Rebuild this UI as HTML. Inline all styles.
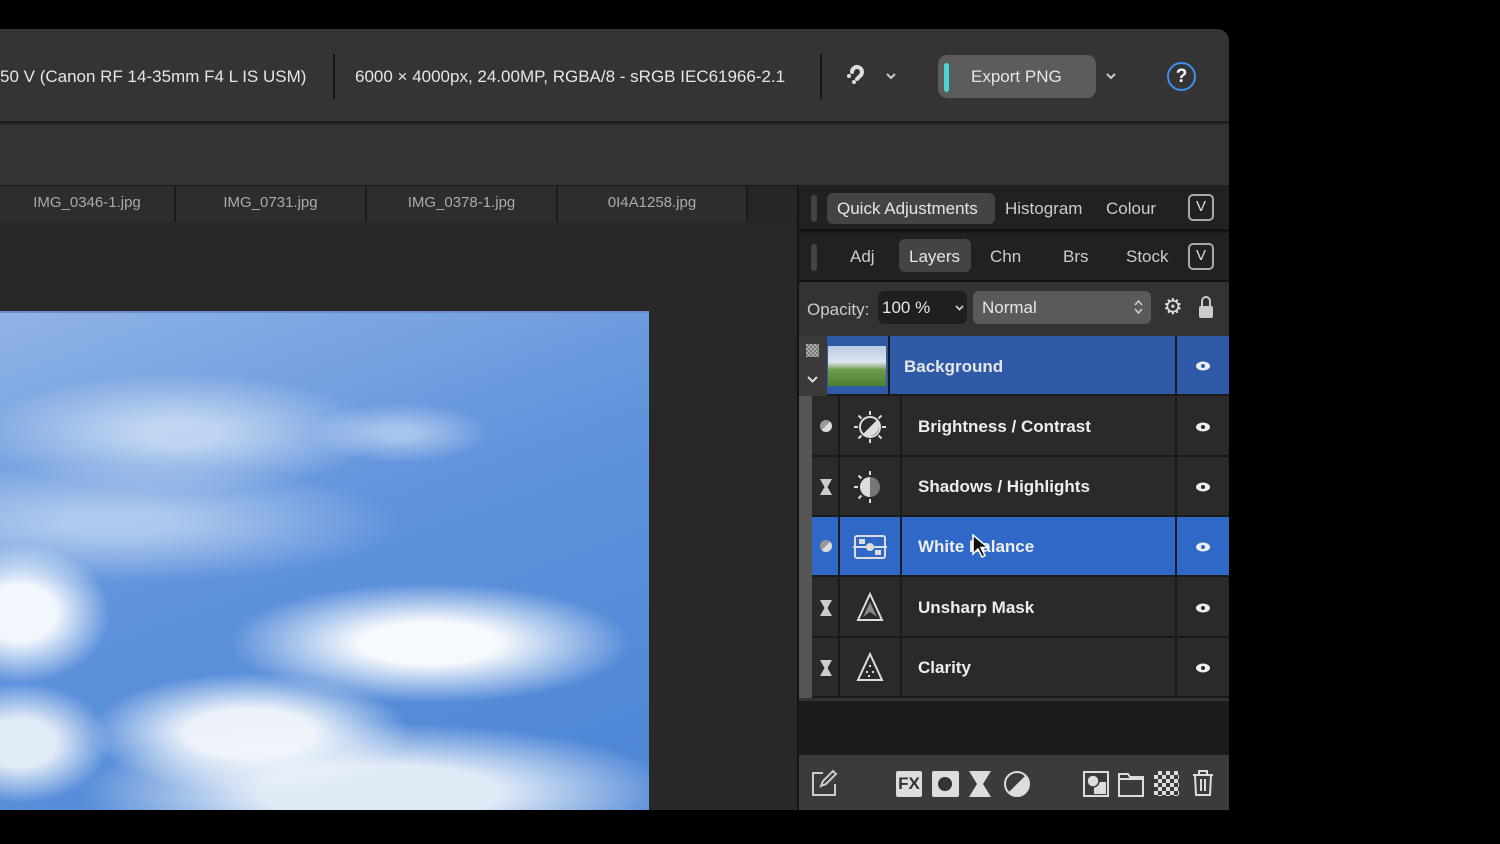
<!DOCTYPE html>
<html><head><meta charset="utf-8"><style>
*{margin:0;padding:0;box-sizing:border-box}
body{width:1500px;height:844px;background:#000;position:relative;overflow:hidden;font-family:"Liberation Sans",sans-serif;color:#ddd}
.a{position:absolute}
.win{left:0;top:29px;width:1229px;height:781px;background:#2a2a2a;border-top-right-radius:12px;overflow:hidden}
.tb{left:0;top:0;width:1229px;height:94px;background:#343434;border-bottom:2px solid #1b1b1b}
.t{font-size:17px;color:#e6e6e6;white-space:nowrap}
.bar2{left:0;top:96px;width:1229px;height:60px;background:#333}
.tabs{left:0;top:156px;width:797px;height:37px;background:#262626;border-top:1px solid #1a1a1a}
.tab{top:0;height:36px;border-right:2px solid #1b1b1b;background:#2d2d2d;color:#aaa;font-size:15px;text-align:center;line-height:34px}
.canvas{left:0;top:193px;width:797px;height:588px;background:#282828}
.img{left:0;top:282px;width:649px;height:500px;border-top:2px solid #6d8fd0;
background:
radial-gradient(ellipse 90px 70px at 20px 300px,rgba(250,252,255,.95) 40%,transparent 100%),
radial-gradient(ellipse 200px 60px at 430px 330px,rgba(255,255,255,.95) 35%,transparent 100%),
radial-gradient(ellipse 160px 60px at 250px 420px,rgba(245,248,252,.95) 40%,transparent 100%),
radial-gradient(ellipse 300px 70px at 380px 480px,rgba(240,244,250,.9) 40%,transparent 100%),
radial-gradient(ellipse 90px 60px at 20px 430px,rgba(240,244,250,.9) 40%,transparent 100%),
radial-gradient(ellipse 200px 60px at 180px 120px,rgba(255,255,255,.55) 20%,transparent 100%),
radial-gradient(ellipse 280px 60px at 120px 210px,rgba(230,238,250,.55) 20%,transparent 100%),
radial-gradient(ellipse 90px 30px at 400px 120px,rgba(230,238,250,.5) 20%,transparent 100%),
linear-gradient(160deg,#8fb3e6 0%,#5f93dc 45%,#4c86d6 100%)}
.panel{left:797px;top:156px;width:432px;height:625px;background:#1c1c1c;border-left:2px solid #151515}
.row{left:0;width:432px}
.pill{border-radius:6px}
.ly{left:0;width:432px;height:60px;border-bottom:2px solid #1a1a1a;background:#2a2a2a}
.ly .nm{position:absolute;left:120px;top:0;line-height:60px;font-size:17px;color:#eee;font-weight:bold}
.ly .c1{position:absolute;left:13px;top:0;width:28px;height:60px;border-right:2px solid #1a1a1a}
.ly .c2{position:absolute;left:43px;top:0;width:60px;height:60px;border-right:2px solid #1a1a1a}
.ly .c3{position:absolute;left:376px;top:0;width:2px;height:60px;background:#1a1a1a}
.eye{position:absolute;left:396px;top:24px}
</style></head><body>
<div class="a win">
 <div class="a tb">
  <div class="a t" style="left:0;top:38px">50 V (Canon RF 14-35mm F4 L IS USM)</div>
  <div class="a" style="left:333px;top:25px;width:2px;height:45px;background:#151515"></div>
  <div class="a t" style="left:355px;top:38px">6000 × 4000px, 24.00MP, RGBA/8 - sRGB IEC61966-2.1</div>
  <div class="a" style="left:820px;top:25px;width:2px;height:45px;background:#151515"></div>
  <svg class="a" style="left:844px;top:34px" width="26" height="26" viewBox="0 0 26 26"><path d="M8 9a5 5 0 1 1 8 4l-3 3" stroke="#ddd" stroke-width="4" fill="none" stroke-linecap="round"/><circle cx="5" cy="13" r="2" fill="#ddd"/><circle cx="10" cy="19" r="2" fill="#ddd"/></svg>
  <svg class="a" style="left:886px;top:44px" width="10" height="7"><path d="M1 1l4 4 4-4" stroke="#ccc" stroke-width="2" fill="none"/></svg>
  <div class="a pill" style="left:938px;top:26px;width:158px;height:43px;background:#5c5c5c;border-radius:9px"></div>
  <div class="a" style="left:944px;top:34px;width:5px;height:29px;background:#4dd4d8;border-radius:3px"></div>
  <div class="a t" style="left:971px;top:38px;font-size:17px">Export PNG</div>
  <svg class="a" style="left:1106px;top:44px" width="10" height="7"><path d="M1 1l4 4 4-4" stroke="#ccc" stroke-width="2" fill="none"/></svg>
  <div class="a" style="left:1167px;top:33px;width:29px;height:29px;border:2px solid #3d8ef0;border-radius:50%;color:#fff;font-weight:bold;font-size:19px;text-align:center;line-height:25px">?</div>
 </div>
 <div class="a bar2"></div>
 <div class="a tabs">
  <div class="a tab" style="left:0;width:176px">IMG_0346-1.jpg</div>
  <div class="a tab" style="left:176px;width:191px">IMG_0731.jpg</div>
  <div class="a tab" style="left:367px;width:191px">IMG_0378-1.jpg</div>
  <div class="a tab" style="left:558px;width:190px">0I4A1258.jpg</div>
 </div>
 <div class="a canvas"></div>
 <div class="a img"></div>
 <div class="a panel">
  <div class="a row" style="top:0;height:47px;background:#212121;border-bottom:3px solid #141414">
   <div class="a" style="left:12px;top:10px;width:6px;height:27px;background:#444;border-radius:3px"></div>
   <div class="a pill" style="left:28px;top:8px;width:168px;height:31px;background:#444"></div>
   <div class="a t" style="left:38px;top:14px">Quick Adjustments</div>
   <div class="a t" style="left:206px;top:14px;color:#ccc">Histogram</div>
   <div class="a t" style="left:307px;top:14px;color:#ccc">Colour</div>
   <div class="a" style="left:389px;top:9px;width:26px;height:27px;border:2px solid #aaa;border-radius:5px;color:#ddd;text-align:center;font-size:15px;line-height:22px">V</div>
  </div>
  <div class="a row" style="top:49px;height:48px;background:#212121;border-bottom:2px solid #141414">
   <div class="a" style="left:12px;top:10px;width:6px;height:27px;background:#444;border-radius:3px"></div>
   <div class="a t" style="left:51px;top:13px;color:#ccc">Adj</div>
   <div class="a pill" style="left:100px;top:5px;width:72px;height:33px;background:#444"></div>
   <div class="a t" style="left:110px;top:13px">Layers</div>
   <div class="a t" style="left:191px;top:13px;color:#ccc">Chn</div>
   <div class="a t" style="left:264px;top:13px;color:#ccc">Brs</div>
   <div class="a t" style="left:327px;top:13px;color:#ccc">Stock</div>
   <div class="a" style="left:389px;top:9px;width:26px;height:27px;border:2px solid #aaa;border-radius:5px;color:#ddd;text-align:center;font-size:15px;line-height:22px">V</div>
  </div>
  <div class="a row" style="top:97px;height:54px;background:#333">
   <div class="a t" style="left:8px;top:18px;color:#ccc">Opacity:</div>
   <div class="a pill" style="left:79px;top:9px;width:89px;height:33px;background:#1f1f1f"></div>
   <div class="a t" style="left:83px;top:16px">100 %</div>
   <svg class="a" style="left:156px;top:23px" width="9" height="6"><path d="M1 1l3.5 3.5L8 1" stroke="#ccc" stroke-width="1.8" fill="none"/></svg>
   <div class="a pill" style="left:174px;top:9px;width:178px;height:33px;background:#5a5a5a"></div>
   <div class="a t" style="left:183px;top:16px">Normal</div>
   <svg class="a" style="left:335px;top:17px" width="9" height="16"><path d="M1 6l3.5-4L8 6M1 10l3.5 4L8 10" stroke="#ccc" stroke-width="1.6" fill="none"/></svg>
   <div class="a t" style="left:364px;top:12px;font-size:22px;color:#ddd">⚙</div>
   <div class="a" style="left:400px;top:24px;width:14px;height:12px;background:#ccc;border-radius:2px"></div>
   <div class="a" style="left:402px;top:14px;width:10px;height:14px;border:2px solid #ccc;border-bottom:none;border-radius:5px 5px 0 0"></div>
  </div>
  <div class="a" style="left:0;top:151px;width:432px;height:362px;background:#282828"></div>
  <div class="a ly" style="top:151px;background:#2f5aa8">
   <div class="a" style="left:0;top:0;width:28px;height:60px;background:#3a3a3a"></div>
   <div class="a" style="left:7px;top:8px;width:13px;height:13px;background:repeating-conic-gradient(#777 0 25%,#aaa 0 50%) 0 0/4px 4px"></div>
   <svg class="a" style="left:8px;top:40px" width="11" height="7"><path d="M1 1l4.5 4.5L10 1" stroke="#ddd" stroke-width="2" fill="none"/></svg>
   <div class="a" style="left:29px;top:10px;width:58px;height:40px;background:linear-gradient(#b9cbe0 0%,#dde6ef 40%,#6f9a4e 60%,#4e7f30 100%)"></div>
   <div class="a" style="left:89px;top:0;width:2px;height:60px;background:#1a1a1a"></div>
   <div class="a t" style="left:105px;top:21px;font-weight:bold">Background</div>
   <div class="a" style="left:376px;top:0;width:2px;height:60px;background:#1a1a1a"></div>
   <svg class="eye" width="16" height="12"><ellipse cx="8" cy="6" rx="7" ry="4.5" fill="#eee"/><circle cx="8" cy="6" r="2" fill="#2f5aa8"/></svg>
  </div>
  <div class="a" style="left:0;top:211px;width:13px;height:302px;background:#555"></div>
  <div class="a ly" style="top:212px;left:13px;width:419px"><div class="c1" style="left:0"></div><div class="c2" style="left:30px"></div>
   <div class="nm" style="left:106px">Brightness / Contrast</div><div class="c3" style="left:363px"></div>
   <div class="a" style="left:8px;top:23px;width:12px;height:12px;border-radius:50%;background:linear-gradient(135deg,#999 50%,#ddd 50%)"></div>
   <svg class="a" style="left:40px;top:12px" width="36" height="36"><circle cx="18" cy="18" r="10" stroke="#ddd" stroke-width="2" fill="none"/><path d="M11 25L25 11A10 10 0 0 1 11 25Z" fill="#ddd"/><g stroke="#ddd" stroke-width="2"><path d="M18 2v4M18 30v4M2 18h4M30 18h4M6.5 6.5l3 3M26.5 26.5l3 3M6.5 29.5l3-3M26.5 9.5l3-3"/></g></svg>
   <svg class="eye" style="left:383px" width="16" height="12"><ellipse cx="8" cy="6" rx="7" ry="4.5" fill="#eee"/><circle cx="8" cy="6" r="2" fill="#2a2a2a"/></svg>
  </div>
  <div class="a ly" style="top:272px;left:13px;width:419px"><div class="c1" style="left:0"></div><div class="c2" style="left:30px"></div>
   <div class="nm" style="left:106px">Shadows / Highlights</div><div class="c3" style="left:363px"></div>
   <svg class="a" style="left:8px;top:22px" width="12" height="16"><path d="M0 0H12L7.5 8L12 16H0L4.5 8Z" fill="#ccc"/></svg>
   <svg class="a" style="left:40px;top:12px" width="36" height="36"><path d="M18 8A10 10 0 0 0 18 28Z" fill="#ddd"/><path d="M18 8A10 10 0 0 1 18 28Z" fill="#777"/><g stroke="#ddd" stroke-width="2"><path d="M18 2v4M18 30v4M2 18h4M6.5 6.5l3 3M6.5 29.5l3-3"/></g></svg>
   <svg class="eye" style="left:383px" width="16" height="12"><ellipse cx="8" cy="6" rx="7" ry="4.5" fill="#eee"/><circle cx="8" cy="6" r="2" fill="#2a2a2a"/></svg>
  </div>
  <div class="a ly" style="top:332px;left:13px;width:419px;background:#3068c8"><div class="c1" style="left:0"></div><div class="c2" style="left:30px"></div>
   <div class="nm" style="left:106px">White Balance</div><div class="c3" style="left:363px"></div>
   <div class="a" style="left:8px;top:23px;width:12px;height:12px;border-radius:50%;background:linear-gradient(135deg,#999 50%,#ddd 50%)"></div>
   <svg class="a" style="left:40px;top:16px" width="36" height="28"><rect x="3" y="3" width="30" height="22" rx="2" stroke="#ddd" stroke-width="2" fill="none"/><path d="M1 14h34" stroke="#ddd" stroke-width="2"/><circle cx="18" cy="14" r="4" fill="#ddd"/><rect x="7" y="6" width="6" height="5" fill="#ddd"/><rect x="23" y="17" width="6" height="5" fill="#ddd"/></svg>
   <svg class="eye" style="left:383px" width="16" height="12"><ellipse cx="8" cy="6" rx="7" ry="4.5" fill="#eee"/><circle cx="8" cy="6" r="2" fill="#3068c8"/></svg>
   <svg class="a" style="left:159px;top:16px" width="18" height="26"><path d="M2 2v19l5-5 4 8 3-1.5-4-8h7z" fill="#111" stroke="#fff" stroke-width="1.5"/></svg>
  </div>
  <div class="a ly" style="top:393px;left:13px;width:419px"><div class="c1" style="left:0"></div><div class="c2" style="left:30px"></div>
   <div class="nm" style="left:106px">Unsharp Mask</div><div class="c3" style="left:363px"></div>
   <svg class="a" style="left:8px;top:22px" width="12" height="16"><path d="M0 0H12L7.5 8L12 16H0L4.5 8Z" fill="#ccc"/></svg>
   <svg class="a" style="left:44px;top:14px" width="28" height="30"><path d="M14 2L26 28H2Z" stroke="#ddd" stroke-width="2" fill="none"/><path d="M14 10L21 25L14 20L7 25Z" fill="#888"/></svg>
   <svg class="eye" style="left:383px" width="16" height="12"><ellipse cx="8" cy="6" rx="7" ry="4.5" fill="#eee"/><circle cx="8" cy="6" r="2" fill="#2a2a2a"/></svg>
  </div>
  <div class="a ly" style="top:453px;left:13px;width:419px"><div class="c1" style="left:0"></div><div class="c2" style="left:30px"></div>
   <div class="nm" style="left:106px">Clarity</div><div class="c3" style="left:363px"></div>
   <svg class="a" style="left:8px;top:22px" width="12" height="16"><path d="M0 0H12L7.5 8L12 16H0L4.5 8Z" fill="#ccc"/></svg>
   <svg class="a" style="left:44px;top:14px" width="28" height="30"><path d="M14 2L26 28H2Z" stroke="#ddd" stroke-width="2" fill="none"/><g fill="#ddd"><rect x="13" y="13" width="2" height="2"/><rect x="10" y="19" width="2" height="2"/><rect x="16" y="19" width="2" height="2"/><rect x="12" y="23" width="2" height="2"/></g></svg>
   <svg class="eye" style="left:383px" width="16" height="12"><ellipse cx="8" cy="6" rx="7" ry="4.5" fill="#eee"/><circle cx="8" cy="6" r="2" fill="#2a2a2a"/></svg>
  </div>
  <div class="a" style="left:0;top:513px;width:432px;height:57px;background:#1c1c1c;border-top:3px solid #333"></div>
  <div class="a" style="left:0;top:570px;width:432px;height:55px;background:#3b3b3b">
   <svg class="a" style="left:11px;top:14px" width="28" height="28"><path d="M13 4H3v22h22V15" stroke="#ccc" stroke-width="2" fill="none"/><path d="M11 17l2-5 10-10 3 3-10 10z" stroke="#ccc" stroke-width="2" fill="none"/></svg>
   <div class="a" style="left:97px;top:16px;width:26px;height:26px;background:#ddd;border-radius:2px;color:#333;font-weight:bold;font-size:17px;text-align:center;line-height:26px">FX</div>
   <div class="a" style="left:133px;top:16px;width:27px;height:26px;background:#ddd;border-radius:2px"><div class="a" style="left:6px;top:6px;width:14px;height:14px;border-radius:50%;background:#333"></div></div>
   <svg class="a" style="left:169px;top:16px" width="24" height="26"><path d="M1 0H23L15 13L23 26H1L9 13Z" fill="#ddd"/></svg>
   <svg class="a" style="left:204px;top:15px" width="28" height="28"><circle cx="14" cy="14" r="12" stroke="#ddd" stroke-width="2" fill="none"/><path d="M5.5 22.5L22.5 5.5A12 12 0 0 1 5.5 22.5Z" fill="#ddd"/></svg>
   <svg class="a" style="left:283px;top:15px" width="28" height="28"><rect x="2" y="2" width="24" height="24" stroke="#ddd" stroke-width="2" fill="none"/><rect x="12" y="12" width="12" height="12" fill="#ddd"/><circle cx="11" cy="11" r="6" fill="#ddd" stroke="#3b3b3b" stroke-width="1.5"/></svg>
   <svg class="a" style="left:318px;top:15px" width="28" height="28"><path d="M2 4h9l2 3h13v19H2Z M2 9h24" stroke="#ddd" stroke-width="2" fill="none"/></svg>
   <div class="a" style="left:355px;top:16px;width:25px;height:25px;background:repeating-conic-gradient(#ddd 0 25%,#3b3b3b 0 50%) 0 0/8px 8px"></div>
   <svg class="a" style="left:392px;top:14px" width="24" height="28"><path d="M2 6h20M8 6V2h8v4M4 6l1 20h14l1-20M10 10v12M14 10v12" stroke="#ddd" stroke-width="2" fill="none"/></svg>
  </div>
 </div>
</div>
</body></html>
